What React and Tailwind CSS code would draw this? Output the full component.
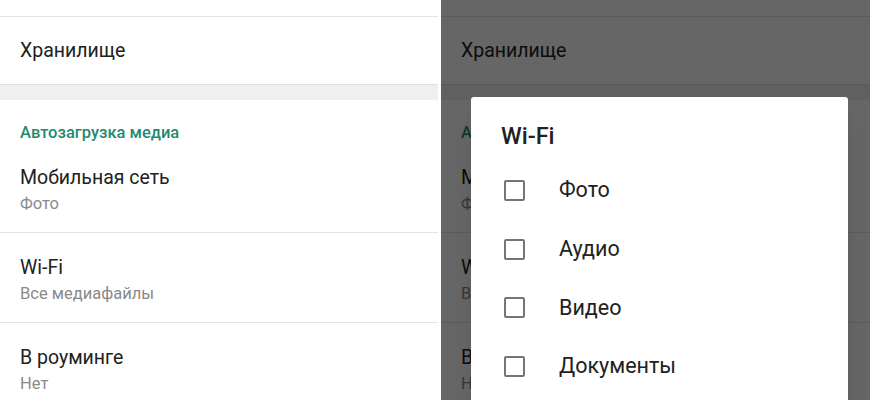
import React from "react";

const font = { fontFamily: "Roboto, 'Noto Sans', sans-serif" };

function Item({ title, sub, divider }) {
  return (
    <div className={"h-[90px] pl-5 pt-[22px] " + (divider ? "border-b border-[#e3e3e3]" : "")}>
      <div className="text-[19.5px] leading-[26px] text-[#212121]">{title}</div>
      <div className="mt-[2px] text-[16.5px] leading-[22px] text-[#8a8a8a]">{sub}</div>
    </div>
  );
}

function Settings() {
  return (
    <div className="flex flex-col bg-white">
      <div className="h-[17px] border-b border-[#e3e3e3]" />
      <div className="flex h-[67px] items-center pl-5 text-[19.5px] leading-[26px] text-[#212121]">
        Хранилище
      </div>
      <div className="h-[16px] border-t border-[#e0e0e0] bg-[#efefef]" />
      <div className="flex h-[43px] items-end pl-5 text-[16.5px] font-medium leading-[22px] text-[#1f8a70]">
        <span className="translate-y-[1px]">Автозагрузка медиа</span>
      </div>
      <Item title="Мобильная сеть" sub="Фото" divider />
      <Item title="Wi-Fi" sub="Все медиафайлы" divider />
      <Item title="В роуминге" sub="Нет" />
    </div>
  );
}

function Check({ label }) {
  return (
    <div className="flex h-[58.7px] items-center">
      <div className="ml-[33px] h-[21px] w-[21px] rounded-[2px] border-2 border-[#757575]" />
      <div className="ml-[34px] text-[21.5px] leading-[26px] text-[#212121]">{label}</div>
    </div>
  );
}

export default function App() {
  return (
    <div className="flex h-[400px] w-[870px] overflow-hidden bg-white" style={font}>
      <div className="w-[438px] shrink-0">
        <Settings />
      </div>
      <div className="w-[3px] shrink-0 bg-white" />
      <div className="relative flex-1 overflow-hidden">
        <Settings />
        <div className="absolute inset-0 bg-black/60" />
        <div className="absolute left-[30px] top-[97px] h-[340px] w-[377px] rounded-[3px] bg-white shadow-xl">
          <div className="pl-[30px] pt-[24px] text-[23.5px] font-medium leading-[30px] text-[#212121]">Wi-Fi</div>
          <div className="mt-[10px]">
            <Check label="Фото" />
            <Check label="Аудио" />
            <Check label="Видео" />
            <Check label="Документы" />
          </div>
        </div>
      </div>
    </div>
  );
}
